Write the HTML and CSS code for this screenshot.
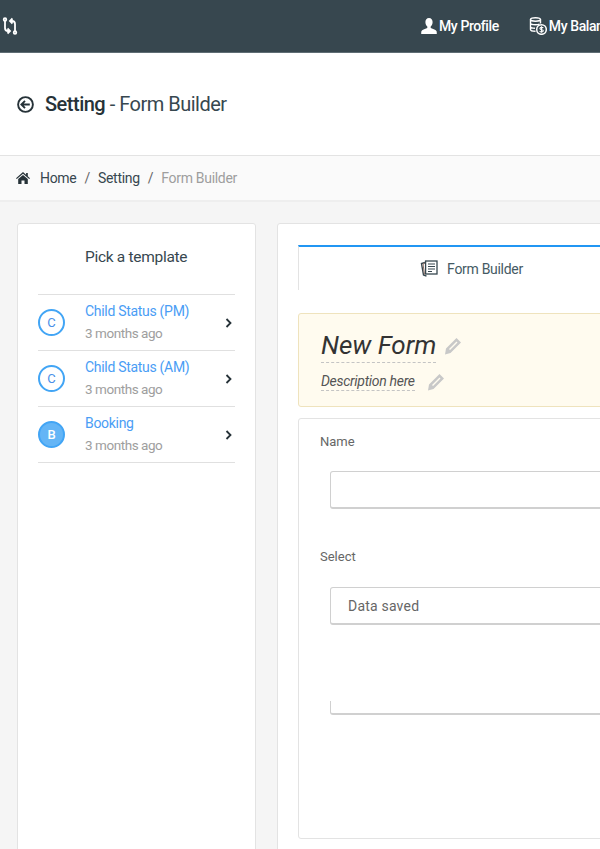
FILE: index.html
```html
<!DOCTYPE html>
<html lang="en">
<head>
    <meta charset="UTF-8">
    <meta name="viewport" content="width=device-width, initial-scale=1.0">
    <title>Form Builder</title>
    <link rel="stylesheet" href="styles.css">
</head>
<body>
    <header class="topbar">
        <svg class="swap-icon" width="16" height="18" viewBox="0 0 16 18" fill="none" stroke="#fff" stroke-width="1.8">
            <circle cx="3" cy="2.5" r="1.3"/>
            <path d="M3 4v7c0 2 1 3 3 3h1.500"/>
            <path d="M5.500 11.500 8 14l-2.500 2.500"/>
            <circle cx="13" cy="15.500" r="1.300"/>
            <path d="M13 14V7c0-2-1-3-3-3H8.500"/>
            <path d="M10.500 1.500 8 4l2.500 2.500"/>
        </svg>
        <nav class="topnav">
            <a class="topnav-item">
                <svg width="16" height="16" viewBox="0 0 16 16" fill="#fff">
                    <path d="M8 0c2.300 0 3.600 1.700 3.600 4 0 2-.9 3.600-1.900 4.500v1.600c2.500.8 5.300 1.800 5.900 3.200.2.600.2 1.700.2 2.700H.2c0-1 0-2.100.2-2.700.6-1.400 3.400-2.400 5.900-3.200V8.500C5.300 7.600 4.400 6 4.400 4 4.400 1.700 5.700 0 8 0z"/>
                </svg>
                My Profile
            </a>
            <a class="topnav-item">
                <svg width="18" height="18" viewBox="0 0 18 18" fill="none" stroke="#fff" stroke-width="1.400">
                    <ellipse cx="6.500" cy="2.500" rx="5" ry="1.800"/>
                    <path d="M1.500 2.500v10c0 1 1.600 1.800 5 1.800M11.500 2.500v4M1.500 6c0 1 2 1.800 5 1.800 1.500 0 3-.2 4-.7M1.500 9.500c0 1 1.600 1.800 4.500 1.800"/>
                    <circle cx="12.500" cy="12.500" r="4.800" stroke-width="1.500"/>
                    <path d="M14.300 10.800c-.5-.5-3.300-.8-3.400.8-.1 1.600 3.500.8 3.400 2.200-.1 1.500-3 1.200-3.700.6M12.500 9.300v6.400" stroke-width="1.100"/>
                </svg>
                My Balance
            </a>
        </nav>
    </header>

    <section class="page-title">
        <svg width="17" height="17" viewBox="0 0 17 17" fill="none" stroke="#263238" stroke-width="1.900">
            <circle cx="8.500" cy="8.500" r="7.400"/>
            <path d="M12.800 8.500H4.600M8 4.900 4.400 8.500 8 12.100"/>
        </svg>
        <h1><b>Setting</b> - Form Builder</h1>
    </section>

    <div class="breadcrumb">
        <svg width="14" height="12" viewBox="0 0 14 12" fill="#263238">
            <path d="M7 0 0 6.200l.8.900L7 1.800l6.200 5.300.8-.9-2.200-1.900V1h-1.700v1.800z"/>
            <path d="M7 3 2.200 7.100V12h3.300V8.500h3V12h3.300V7.100z"/>
        </svg>
        <a>Home</a>
        <span class="sep">/</span>
        <a>Setting</a>
        <span class="sep">/</span>
        <span class="current">Form Builder</span>
    </div>

    <main class="content">
        <aside class="card templates">
            <h3>Pick a template</h3>
            <ul class="template-list">
                <li>
                    <span class="avatar">C</span>
                    <div class="template-info">
                        <a>Child Status (PM)</a>
                        <small>3 months ago</small>
                    </div>
                    <svg class="chevron" width="7" height="10" viewBox="0 0 7 10" fill="none" stroke="#263238" stroke-width="1.800"><path d="M1.500 1 5.500 5l-4 4"/></svg>
                </li>
                <li>
                    <span class="avatar">C</span>
                    <div class="template-info">
                        <a>Child Status (AM)</a>
                        <small>3 months ago</small>
                    </div>
                    <svg class="chevron" width="7" height="10" viewBox="0 0 7 10" fill="none" stroke="#263238" stroke-width="1.800"><path d="M1.500 1 5.500 5l-4 4"/></svg>
                </li>
                <li>
                    <span class="avatar filled">B</span>
                    <div class="template-info">
                        <a>Booking</a>
                        <small>3 months ago</small>
                    </div>
                    <svg class="chevron" width="7" height="10" viewBox="0 0 7 10" fill="none" stroke="#263238" stroke-width="1.800"><path d="M1.500 1 5.500 5l-4 4"/></svg>
                </li>
            </ul>
        </aside>

        <section class="card builder">
            <div class="tabs">
                <div class="tab active">
                    <svg width="18" height="17" viewBox="0 0 18 17" fill="none" stroke="#37474f">
                        <path d="M5 2.500 1.500 3.500 3.500 15l3 1.200" stroke-width="1.400"/>
                        <path d="M5 3 3 4l1.500 10.500" stroke="#8d6e63"/>
                        <rect x="5.600" y="1" width="11.400" height="13" fill="#fff" stroke-width="1.300"/>
                        <path d="M8 4h7M8 6.500h7M8 9h7M8 11.500h4" stroke-width="1.200"/>
                    </svg>
                    Form Builder
                </div>
            </div>

            <div class="form-head">
                <div class="form-title">
                    <span class="editable">New Form</span>
                    <svg width="18" height="18" viewBox="0 0 18 18" fill="#c8c8c8" fill-rule="evenodd"><path d="M12.500 1 17 5.500 6.500 16 1 17.500 2 11.500zM12.500 4.500 5 12l1 1 7.500-7.500z"/></svg>
                </div>
                <div class="form-desc">
                    <span class="editable">Description here</span>
                    <svg width="18" height="18" viewBox="0 0 18 18" fill="#c8c8c8" fill-rule="evenodd"><path d="M12.500 1 17 5.500 6.500 16 1 17.500 2 11.500zM12.500 4.500 5 12l1 1 7.500-7.500z"/></svg>
                </div>
            </div>

            <div class="form-box">
                <label>Name</label>
                <div class="field"></div>
                <label class="select-label">Select</label>
                <div class="field select-field">Data saved</div>
                <div class="field-stub"></div>
            </div>
        </section>
    </main>
</body>
</html>
```

FILE: styles.css
```css
html, body {
    height: 849px;
    overflow: hidden;
}

body {
    width: 600px;
    margin: 0;
    font-family: Roboto, "Liberation Sans", sans-serif;
    font-size: 14px;
    letter-spacing: -0.3px;
    color: #333;
    background-color: #f5f5f5;
}

/* Top bar */
.topbar {
    display: flex;
    align-items: center;
    justify-content: space-between;
    height: 52px;
    padding-left: 2px;
    background-color: #37474f;
    border-bottom: 1px solid #5f6d74;
}

.swap-icon {
    margin-top: -1px;
}

.topnav {
    display: flex;
    flex-shrink: 0;
    width: 179px;
    gap: 30px;
    white-space: nowrap;
}

.topnav-item {
    display: flex;
    align-items: center;
    gap: 2px;
    color: white;
    font-weight: 500;
    font-size: 14px;
    letter-spacing: -0.4px;
}

/* Title */
.page-title {
    display: flex;
    align-items: center;
    gap: 11px;
    height: 102px;
    padding-left: 17px;
    background-color: white;
    border-bottom: 1px solid #e3e3e3;
}

.page-title h1 {
    margin: 0;
    font-size: 20px;
    font-weight: 400;
    letter-spacing: -0.5px;
    color: #37474f;
}

.page-title b {
    font-weight: 500;
    color: #263238;
}

/* Breadcrumb */
.breadcrumb {
    display: flex;
    align-items: center;
    height: 44px;
    padding-left: 16px;
    background-color: #fafafa;
    border-bottom: 2px solid #eeeeee;
    color: #37474f;
}

.breadcrumb svg {
    margin-right: 10px;
}

.breadcrumb .sep {
    margin: 0 8px;
    color: #666;
}

.breadcrumb .current {
    color: #9e9e9e;
}

/* Main */
.content {
    display: flex;
    gap: 21px;
    width: 1000px;
    padding: 21px 17px;
}

.card {
    background-color: white;
    border: 1px solid #e3e3e3;
    border-radius: 3px;
    height: 700px;
}

.templates {
    flex-shrink: 0;
    box-sizing: border-box;
    width: 239px;
    padding: 0 20px;
}

.templates h3 {
    margin: 24px 0 27px;
    padding-left: 47px;
    font-size: 15.500px;
    font-weight: 400;
    line-height: 19px;
    color: #37474f;
}

.template-list {
    margin: 0;
    padding: 0;
    list-style: none;
    border-top: 1px solid #e0e0e0;
}

.template-list li {
    display: flex;
    align-items: center;
    height: 55px;
    border-bottom: 1px solid #e0e0e0;
}

.avatar {
    display: flex;
    align-items: center;
    justify-content: center;
    box-sizing: border-box;
    width: 27px;
    height: 27px;
    flex-shrink: 0;
    border: 2px solid #42a5f5;
    border-radius: 50%;
    color: #4a90e8;
    font-size: 13px;
    letter-spacing: 0;
}

.avatar.filled {
    color: white;
    background-color: #64b5f6;
    font-weight: 500;
}

.template-info {
    flex: 1;
    padding-left: 20px;
    margin-top: -1px;
}

.template-info a {
    display: block;
    color: #4a9df5;
    line-height: 20px;
}

.template-info small {
    display: block;
    margin-top: 2px;
    font-size: 13.500px;
    line-height: 20px;
    letter-spacing: -0.45px;
    color: #9e9e9e;
}

.chevron {
    margin-right: 3px;
}

/* Builder */
.builder {
    flex: 1;
    padding: 21px 20px;
}

.tabs {
    display: flex;
    height: 45px;
}

.tab {
    display: flex;
    align-items: center;
    justify-content: center;
    gap: 9px;
    box-sizing: border-box;
    width: 347px;
    height: 45px;
    border-top: 2px solid #2196f3;
    border-left: 1px solid #e3e3e3;
    border-right: 1px solid #e3e3e3;
    color: #455a64;
}

.form-head {
    box-sizing: border-box;
    height: 94px;
    margin-top: 23px;
    padding: 15px 22px;
    background-color: #fffbef;
    border: 1px solid #efe3bd;
    border-radius: 3px;
}

.form-title, .form-desc {
    display: flex;
    align-items: center;
    font-style: italic;
}

.form-title {
    gap: 8px;
    font-size: 26px;
    line-height: 33px;
    letter-spacing: 0;
    color: #333;
}

.form-desc {
    gap: 12px;
    margin-top: 9px;
    font-size: 14px;
    line-height: 18px;
    color: #555;
}

.editable {
    border-bottom: 1px dashed #c4c4c4;
}

.form-box {
    box-sizing: border-box;
    height: 421px;
    margin-top: 11px;
    padding: 14px 21px;
    border: 1px solid #e3e3e3;
    border-radius: 3px;
}

.form-box label {
    display: block;
    height: 18px;
    line-height: 18px;
    font-size: 13px;
    letter-spacing: 0;
    color: #666;
}

.form-box .select-label {
    margin-top: 39px;
}

.field {
    display: flex;
    align-items: center;
    box-sizing: border-box;
    height: 38px;
    margin: 20px 0 0 10px;
    padding-left: 17px;
    border: 1px solid #d0d0d0;
    border-bottom-width: 2px;
    border-radius: 3px;
    letter-spacing: 0.2px;
    color: #666;
}

.select-field {
    margin-top: 21px;
}

.field-stub {
    box-sizing: border-box;
    height: 14px;
    margin: 76px 0 0 10px;
    border-left: 1px solid #d0d0d0;
    border-bottom: 2px solid #d0d0d0;
    border-radius: 0 0 0 3px;
}
```
